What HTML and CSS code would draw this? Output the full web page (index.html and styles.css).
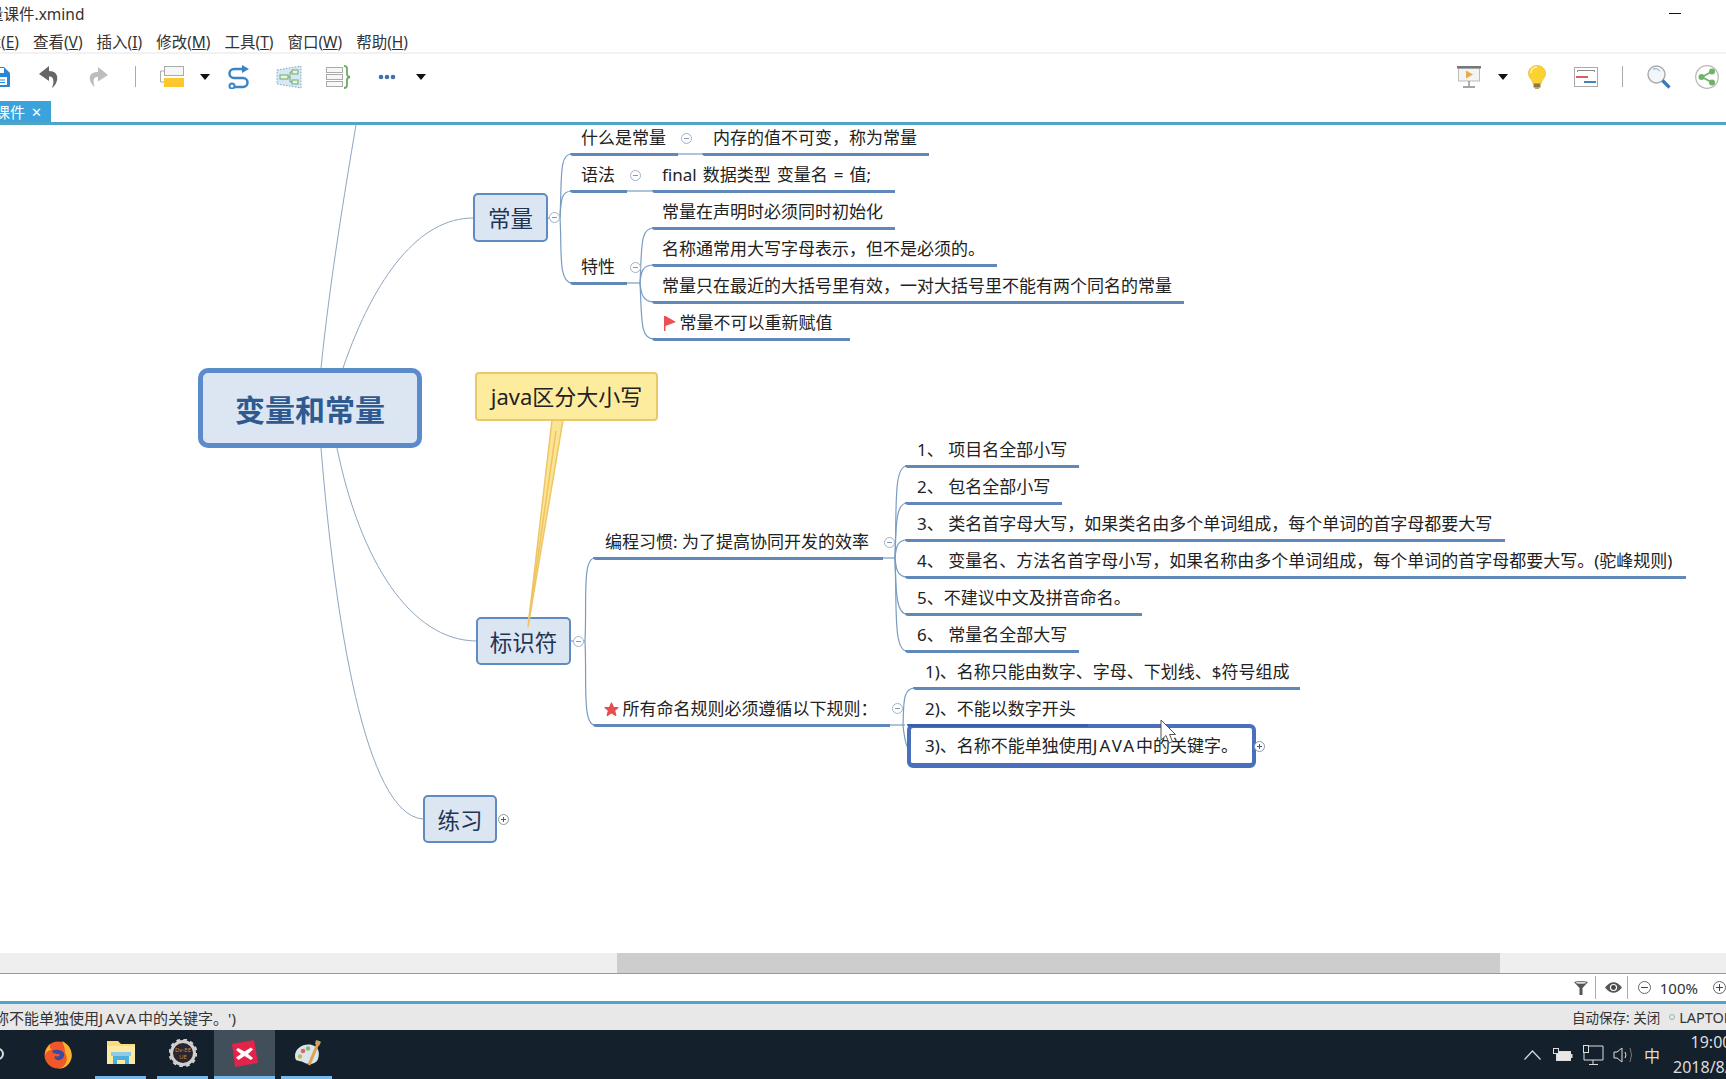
FILE: index.html
```html
<!DOCTYPE html>
<html lang="en">
<head>
  <meta charset="UTF-8">
  <meta name="viewport" content="width=device-width, initial-scale=1.0">
  <title>XMind</title>
  <link rel="stylesheet" href="styles.css">
</head>
<body>
  <div class="app">
    <!-- Window title -->
    <div class="titlebar">
      <span class="title-text">变量和常量课件.xmind</span>
      <span class="win-min"></span>
    </div>

    <!-- Menu -->
    <div class="menubar">
      <span>编辑(<u>E</u>)</span>
      <span>查看(<u>V</u>)</span>
      <span>插入(<u>I</u>)</span>
      <span>修改(<u>M</u>)</span>
      <span>工具(<u>T</u>)</span>
      <span>窗口(<u>W</u>)</span>
      <span>帮助(<u>H</u>)</span>
    </div>

    <!-- Toolbar -->
    <div class="toolbar">
      <svg class="tb-save" width="20" height="20" viewBox="0 0 20 20"><path d="M1 0H14L20 6V19Q20 20 19 20H1Q0 20 0 19V1Q0 0 1 0Z" fill="#2a86d6"/><rect x="4" y="1" width="10" height="5" fill="#fff"/><rect x="4" y="10" width="13" height="8" fill="#fff"/><path d="M6 13H15M6 15.500H15" stroke="#2a86d6"/></svg>
      <svg class="tb-undo" width="20" height="22" viewBox="0 0 20 22"><path d="M10 0L0 8L10 15V10.500C14 10 16 14 13 22C19 18 22 5 10 5Z" fill="#666"/></svg>
      <svg class="tb-redo" width="20" height="22" viewBox="0 0 20 22"><path d="M10 1L20 9L10 15.500V11C6 10.500 4 14 7 21C1 17 -2 6 10 6Z" fill="#bdbdbd"/></svg>
      <span class="tb-sep tb-sep-1"></span>
      <svg class="tb-topic" width="24" height="21" viewBox="0 0 24 21"><rect x="4.500" y=".5" width="19" height="9" fill="#f6f6f8" stroke="#aaa"/><path d="M4 5H.5V16H4" fill="none" stroke="#aaa"/><rect x="4" y="12" width="20" height="9" fill="#fcc82d"/></svg>
      <span class="caret tb-caret-1"></span>
      <svg class="tb-rel" width="23" height="24" viewBox="0 0 23 24"><path d="M18 4H7a4.500 4.500 0 0 0 0 9H16a4.500 4.500 0 0 1 0 9H8" fill="none" stroke="#3a85c6" stroke-width="2.500"/><path d="M15 0L22 4L15 8Z" fill="#3a85c6"/><circle cx="5" cy="21" r="2.500" fill="#fff" stroke="#3a85c6" stroke-width="2"/></svg>
      <svg class="tb-bound" width="26" height="24" viewBox="0 0 26 24"><path d="M1 5L25 1V23L1 19Z" fill="#d5e8f3" stroke="#7fa6c4" stroke-dasharray="1.500 1.500"/><g fill="#e8f5d8" stroke="#72a77b"><rect x="4" y="10" width="8" height="4"/><rect x="16" y="5" width="6" height="4"/><rect x="16" y="15" width="6" height="4"/></g><path d="M12 12H14M14 7V17M14 7H16M14 17H16" stroke="#72a77b" fill="none"/></svg>
      <svg class="tb-summary" width="25" height="24" viewBox="0 0 25 24"><g fill="#f7f7f7" stroke="#aaa"><rect x=".5" y="2.500" width="16" height="5"/><rect x=".5" y="9.500" width="16" height="5"/><rect x=".5" y="16.500" width="16" height="5"/></g><path d="M18 .9Q21 1 21 4V9Q21 11.500 24 12Q21 12.500 21 15V20Q21 23 18 23" fill="none" stroke="#6fa868" stroke-width="1.800"/></svg>
      <svg class="tb-dots" width="18" height="6" viewBox="0 0 18 6"><g fill="#3e72ab"><circle cx="3" cy="3" r="2.300"/><circle cx="9" cy="3" r="2.300"/><circle cx="15" cy="3" r="2.300"/></g></svg>
      <span class="caret tb-caret-2"></span>

      <svg class="tb-present" width="24" height="22" viewBox="0 0 24 22"><rect x="1.500" y="2" width="21" height="13" fill="#f4f4f4" stroke="#bbb"/><rect width="24" height="2.500" fill="#777"/><path d="M12 15V20M6 21H18" stroke="#888" stroke-width="1.300"/><path d="M9 4.500L16 8.500L9 12.500Z" fill="#eda84a"/></svg>
      <span class="caret tb-caret-3"></span>
      <svg class="tb-bulb" width="18" height="24" viewBox="0 0 18 24"><path d="M9 .5C4 .5 .5 4 .5 8.500C.5 13 4.500 14.500 5 18.500H13C13.500 14.500 17.500 13 17.500 8.500C17.500 4 14 .5 9 .5Z" fill="#fbd22f" stroke="#eac65a"/><path d="M9 2C6 2 3 4 3 8" stroke="#fdeb9a" stroke-width="2" fill="none"/><rect x="5.500" y="18.500" width="7" height="4" fill="#8d7a43"/><rect x="7" y="22" width="4" height="2" fill="#b9a56b"/></svg>
      <svg class="tb-gantt" width="24" height="20" viewBox="0 0 24 20"><rect x=".5" y=".5" width="23" height="19" fill="#fff" stroke="#aaa"/><path d="M3.500 5V3.500H20.500V5" fill="none" stroke="#888"/><rect x="2" y="9" width="12" height="2" fill="#e05a5f"/><rect x="10" y="14" width="12" height="2" fill="#3f86bd"/></svg>
      <span class="tb-sep tb-sep-2"></span>
      <svg class="tb-search" width="24" height="24" viewBox="0 0 24 24"><circle cx="9.500" cy="9.500" r="8.500" fill="#f2f6fa" stroke="#a9a9a9" stroke-width="1.400"/><path d="M6 4Q10 2.500 13 6" stroke="#7ea6cb" fill="none"/><path d="M15.500 15.500L22.500 22.500" stroke="#3a78b8" stroke-width="3.200"/></svg>
      <svg class="tb-share" width="24" height="24" viewBox="0 0 24 24"><circle cx="12" cy="12" r="11.300" fill="#fff" stroke="#b8b8b8" stroke-width="1.200"/><path d="M7 12L17 6.500M7 12L17 17.500" stroke="#6fb26a" stroke-width="1.800"/><g fill="#6fb26a"><circle cx="6.500" cy="12" r="3"/><circle cx="17" cy="6.500" r="3"/><circle cx="17" cy="17.500" r="3"/></g></svg>
    </div>

    <!-- Tabs -->
    <div class="tabbar">
      <div class="tab"><span>变量和常量课件</span><b>✕</b></div>
    </div>
    <div class="blue-rule"></div>

    <!-- Mind map canvas -->
    <div class="map">
      <svg class="links" width="1726" height="828" viewBox="0 125 1726 828">
        <g fill="none" stroke="#8fa6bf">
          <path d="M321 368C330 280 345 190 356 125"/>
          <path d="M343 368C375 275 420 218 473 218"/>
          <path d="M337 448C360 560 410 640 476 641"/>
          <path d="M321 448C335 620 365 815 423 819"/>
        </g>
        <g fill="none" stroke="#7a9cc2" stroke-width="1.200">
          <path d="M548 218H560"/>
          <path d="M560 218C562 175 559 154 572 154"/>
          <path d="M560 218C561 200 561 191 572 191"/>
          <path d="M560 218C562 250 558 283 572 283"/>
          <path d="M678 154H702"/>
          <path d="M627 191H652"/>
          <path d="M627 283H640"/>
          <path d="M640 283C642 245 640 228 654 228"/>
          <path d="M640 283C641 272 642 265 654 265"/>
          <path d="M640 283C641 292 642 302 654 302"/>
          <path d="M640 283C642 320 640 339 654 339"/>
          <path d="M571 641H585"/>
          <path d="M585 641C587 600 582 558 595 558"/>
          <path d="M585 641C587 680 582 725 595 725"/>
          <path d="M883 558H895"/>
          <path d="M895 558C897 510 893 466 907 466"/>
          <path d="M895 558C896 530 895 503 907 503"/>
          <path d="M895 558C896 550 896 540 907 540"/>
          <path d="M895 558C896 566 896 577 907 577"/>
          <path d="M895 558C896 585 895 614 907 614"/>
          <path d="M895 558C897 605 893 651 907 651"/>
          <path d="M890 725H905"/>
          <path d="M903 725C904 705 902 688 915 688"/>
          <path d="M903 725C904 735 905 745 909 750"/>
        </g>
      </svg>

      <div class="node root">变量和常量</div>
      <div class="node main-const">常量</div>
      <div class="node main-ident">标识符</div>
      <div class="node main-practice">练习</div>

      <div class="leaf l-what">什么是常量</div>
      <div class="leaf l-value">内存的值不可变，称为常量</div>
      <div class="leaf l-syntax">语法</div>
      <div class="leaf l-final">final 数据类型 变量名 = 值;</div>
      <div class="leaf l-feature">特性</div>
      <div class="leaf l-init">常量在声明时必须同时初始化</div>
      <div class="leaf l-name">名称通常用大写字母表示，但不是必须的。</div>
      <div class="leaf l-scope">常量只在最近的大括号里有效，一对大括号里不能有两个同名的常量</div>
      <div class="leaf l-flag">
        <svg width="12" height="15" viewBox="0 0 12 15"><path d="M0 0H1.500L12 6L1.500 10V15H0Z" fill="#ee4f4f"/></svg>
        常量不可以重新赋值
      </div>

      <div class="leaf l-habit">编程习惯: 为了提高协同开发的效率</div>
      <div class="leaf l-h1">1、 项目名全部小写</div>
      <div class="leaf l-h2">2、 包名全部小写</div>
      <div class="leaf l-h3">3、 类名首字母大写，如果类名由多个单词组成，每个单词的首字母都要大写</div>
      <div class="leaf l-h4">4、 变量名、方法名首字母小写，如果名称由多个单词组成，每个单词的首字母都要大写。(驼峰规则)</div>
      <div class="leaf l-h5">5、不建议中文及拼音命名。</div>
      <div class="leaf l-h6">6、 常量名全部大写</div>

      <div class="leaf l-rules">
        <svg width="15" height="15" viewBox="0 0 15 15"><path d="M7.500 1L9.500 5.500H14L10.500 8.500L11.800 13.500L7.500 10.800L3.200 13.500L4.500 8.500L1 5.500H5.500Z" fill="#e94c4c" stroke="#e94c4c" stroke-width="1.200" stroke-linejoin="round"/></svg>
        所有命名规则必须遵循以下规则：
      </div>
      <div class="leaf l-r1">1)、名称只能由数字、字母、下划线、$符号组成</div>
      <div class="selected">3)、名称不能单独使用<span class="wide">JAVA</span>中的关键字。</div>
      <div class="leaf l-r2">2)、不能以数字开头</div>

      <span class="fold f-what"></span>
      <span class="fold f-syntax"></span>
      <span class="fold f-const"></span>
      <span class="fold f-feature"></span>
      <span class="fold f-ident"></span>
      <span class="fold f-habit"></span>
      <span class="fold f-rules"></span>
      <span class="fold plus f-sel"></span>
      <span class="fold plus f-practice"></span>

      <svg class="callout-tail" width="40" height="210" viewBox="0 0 40 210"><path d="M26 1H37L2 208Z" fill="#fbe594" stroke="#eec567" stroke-width="1.500"/><path d="M30 12L3 200" stroke="#f0c35e" stroke-width="1.500"/></svg>
      <div class="callout">java区分大小写</div>

      <svg class="cursor" width="16" height="26" viewBox="0 0 16 26"><path d="M1 1V21L6 16.500L9 24L12.500 22.500L9.500 15.500H15.500Z" fill="#fff" stroke="#555"/></svg>
    </div>

    <!-- Horizontal scrollbar -->
    <div class="hscroll"><div class="thumb"></div></div>

    <!-- Filter / zoom row -->
    <div class="viewbar">
      <svg class="vb-filter" width="14" height="14" viewBox="0 0 14 14"><path d="M0 1Q7 -1 14 1L8.500 7V14H5.500V7Z" fill="#555"/><ellipse cx="7" cy="1.800" rx="5" ry="1" fill="#ddd"/></svg>
      <span class="vb-sep"></span>
      <svg class="vb-eye" width="17" height="11" viewBox="0 0 17 11"><path d="M0 5.500Q8.500 -5 17 5.500Q8.500 16 0 5.500Z" fill="#555"/><circle cx="8.500" cy="5.500" r="3.600" fill="#fff"/><circle cx="8.500" cy="5.500" r="2.400" fill="#444"/></svg>
      <span class="vb-sep"></span>
      <span class="zoom-btn vb-minus"></span>
      <span class="zoom-label">100%</span>
      <span class="zoom-btn plus vb-plus"></span>
    </div>
    <div class="blue-rule"></div>

    <!-- Status bar -->
    <div class="statusbar">
      <div class="status-msg"><span>名称不能单独使用<span class="wide">JAVA</span>中的关键字。')</span></div>
      <div class="status-right">自动保存: 关闭<i></i><span class="host">LAPTOP-8VQ</span></div>
    </div>

    <!-- Windows taskbar -->
    <div class="taskbar">
      <span class="cortana"></span>
      <div class="task t-firefox">
        <svg width="28" height="28" viewBox="0 0 28 28"><circle cx="14" cy="14" r="13.500" fill="#f0582a"/><path d="M18 0C27 4 30 14 26 21C23 26 18 28 14 28C22 26 25 18 21 12C21 8 20 4 18 0Z" fill="#fbb32d"/><path d="M6 3C3 6 1 10 1 14C3 10 5 9 8 9C5 7 6 5 6 3Z" fill="#fbb32d"/><path d="M8 10C11 8 17 8 20 12C21 16 18 20 13 19C11 18 10 17 11 15C14 16 17 15 15 13C12 13 9 13 8 10Z" fill="#3b4aa8"/></svg>
      </div>
      <div class="task running t-files">
        <svg width="28" height="26" viewBox="0 0 28 26"><path d="M0 1H11L14 4H28V24H0Z" fill="#fbdb7c"/><path d="M0 6H28V24H0Z" fill="#fce9a4"/><rect x="6" y="16" width="16" height="8" fill="#4cb0dc"/><rect x="10" y="20" width="8" height="4" fill="#fce9a4"/><path d="M4 12H24V16H4Z" fill="#8fcbe8"/></svg>
      </div>
      <div class="task running t-gear">
        <svg width="28" height="28" viewBox="0 0 28 28"><circle cx="14" cy="14" r="11.500" fill="#2b2530" stroke="#cfcfcf" stroke-width="3"/><circle cx="14" cy="14" r="13" fill="none" stroke="#cfcfcf" stroke-width="3" stroke-dasharray="3.500 3.300"/><text x="14" y="12.500" class="gear-text">Dv-EE</text><text x="14" y="19.500" class="gear-text">UE</text></svg>
      </div>
      <div class="task running active t-xmind">
        <svg width="27" height="27" viewBox="0 0 27 27"><path d="M1 4L23 0L27 23L4 27Z" fill="#e4234a"/><path d="M7 8L13.500 11.500L20 7.500L22 9.500L17 14L22 18L20 20L13.500 16L7.500 20L5 17.500L10 14L5 10Z" fill="#fff"/></svg>
      </div>
      <div class="task running t-paint">
        <svg width="30" height="29" viewBox="0 0 30 29"><path d="M3 17C3 9 12 4 20 6C27 8 28 14 26 20C24 26 15 26 11 23C8 21 3 24 3 17Z" fill="#d8e6ec"/><circle cx="11" cy="12" r="2.300" fill="#d9665f"/><circle cx="16" cy="9.500" r="2.200" fill="#7dbb6f"/><circle cx="8" cy="17.500" r="2.200" fill="#c9b35a"/><path d="M27 2L17 26" stroke="#dfa052" stroke-width="3"/><path d="M24 1L29 3L27 7L23 5Z" fill="#c9a05f"/></svg>
      </div>

      <div class="tray">
        <svg class="tr-up" width="17" height="10" viewBox="0 0 17 10"><path d="M.5 9.500L8.500 1L16.500 9.500" fill="none" stroke="#ddd" stroke-width="1.200"/></svg>
        <svg class="tr-batt" width="20" height="14" viewBox="0 0 20 14"><rect x="3.500" y="3.500" width="14" height="9" fill="#e8e8e8" stroke="#ddd"/><rect x="18" y="6" width="1.500" height="4" fill="#ddd"/><rect x=".5" y=".5" width="5" height="5" fill="#14202b" stroke="#ddd"/></svg>
        <svg class="tr-net" width="21" height="20" viewBox="0 0 21 20"><path d="M1 1H20V15H1ZM10 15V19M6 19.500H15" fill="none" stroke="#ddd"/><rect x=".5" y=".5" width="5" height="7" fill="#14202b" stroke="#ddd"/></svg>
        <svg class="tr-vol" width="20" height="16" viewBox="0 0 20 16"><path d="M1 5H4L9 1V15L4 11H1Z" fill="none" stroke="#ddd"/><path d="M12 5Q14 8 12 11" fill="none" stroke="#ddd"/><path d="M17 1Q20 8 17 15" fill="none" stroke="#777"/></svg>
        <span class="tr-ime">中</span>
        <div class="clock"><span>19:00</span><span>2018/8/30</span></div>
      </div>
    </div>
  </div>
</body>
</html>
```

FILE: styles.css
```css
/* Reset and General Styling */
* {
  margin: 0;
  padding: 0;
  box-sizing: border-box;
}

html, body {
  width: 1726px;
  height: 1079px;
  overflow: hidden;
}

body {
  font-family: 'Noto Sans', 'Noto Sans CJK SC', sans-serif;
  background-color: #fff;
  color: #222;
}

.app {
  display: flex;
  flex-direction: column;
  width: 1726px;
  height: 1079px;
  overflow: hidden;
}

.wide {
  letter-spacing: 2px;
}

/* Title and menu */
.titlebar {
  height: 27px;
  display: flex;
  align-items: center;
  font-size: 15.5px;
  color: #333;
  flex-shrink: 0;
}

.title-text {
  margin-left: -74px;
  white-space: nowrap;
}

.win-min {
  width: 12px;
  height: 1px;
  background-color: #111;
  margin-left: auto;
  margin-right: 45px;
}

.menubar {
  height: 25px;
  display: flex;
  align-items: center;
  gap: 14px;
  margin-left: -30px;
  padding-top: 3px;
  font-size: 15.5px;
  color: #333;
  white-space: nowrap;
  flex-shrink: 0;
}

/* Toolbar */
.toolbar {
  height: 49px;
  display: flex;
  align-items: center;
  border-top: 2px solid #f2f2f2;
  padding-bottom: 2px;
  flex-shrink: 0;
}

.tb-save { margin-left: -10px; flex-shrink: 0; }
.tb-undo { margin-left: 29px; }
.tb-redo { margin-left: 29px; }
.tb-sep { width: 1px; height: 21px; background-color: #aaa; }
.tb-sep-1 { margin-left: 27px; }
.tb-topic { margin-left: 24px; }
.caret {
  width: 0;
  height: 0;
  border-left: 5px solid transparent;
  border-right: 5px solid transparent;
  border-top: 6px solid #111;
}
.tb-caret-1 { margin-left: 16px; }
.tb-rel { margin-left: 17px; }
.tb-bound { margin-left: 26px; }
.tb-summary { margin-left: 24px; }
.tb-dots { margin-left: 27px; }
.tb-caret-2 { margin-left: 20px; }
.tb-present { margin-left: auto; }
.tb-caret-3 { margin-left: 17px; }
.tb-bulb { margin-left: 20px; }
.tb-gantt { margin-left: 28px; }
.tb-sep-2 { margin-left: 24px; }
.tb-search { margin-left: 24px; }
.tb-share { margin-left: 24px; margin-right: 7px; }

/* Tabs */
.tabbar {
  height: 21px;
  flex-shrink: 0;
}

.tab {
  width: 51px;
  height: 21px;
  background-color: #3aa3dc;
  color: #fff;
  display: flex;
  justify-content: flex-end;
  align-items: center;
  gap: 6px;
  padding-right: 9px;
  font-size: 15px;
  white-space: nowrap;
  overflow: hidden;
}

.tab b {
  font-size: 13px;
  font-weight: normal;
}

.blue-rule {
  height: 3px;
  background-color: #4fa5c8;
  flex-shrink: 0;
}

/* Mind map */
.map {
  position: relative;
  height: 828px;
  flex-shrink: 0;
  overflow: hidden;
  background-color: #fff;
}

.links {
  position: absolute;
  left: 0;
  top: 0;
}

.node {
  position: absolute;
  display: flex;
  align-items: center;
  justify-content: center;
  background-color: #dce6f3;
  border: 2px solid #5f8bc0;
  border-radius: 5px;
  font-size: 22.5px;
  color: #1f3554;
}

.root {
  left: 198px;
  top: 243px;
  width: 224px;
  height: 80px;
  border-width: 5px;
  border-color: #5b8bcb;
  border-radius: 10px;
  font-size: 30px;
  font-weight: bold;
  color: #2f5a90;
}

.main-const { left: 473px; top: 68px; width: 75px; height: 49px; }
.main-ident { left: 476px; top: 492px; width: 95px; height: 48px; }
.main-practice { left: 423px; top: 670px; width: 74px; height: 48px; }

.leaf {
  position: absolute;
  height: 33px;
  line-height: 30px;
  font-size: 17px;
  color: #222;
  white-space: nowrap;
  border-bottom: 3px solid #6089ba;
  border-radius: 0 0 0 3px;
}

.leaf svg {
  vertical-align: -2px;
  margin-right: -1px;
}

/* top = underline y - 156 */
.l-what { left: 570px; top: -2px; width: 108px; padding-left: 11px; }
.l-value { left: 702px; top: -2px; width: 227px; padding-left: 11px; }
.l-syntax { left: 570px; top: 35px; width: 57px; padding-left: 11px; }
.l-final { left: 652px; top: 35px; width: 243px; padding-left: 10px; word-spacing: 1.6px; }
.l-feature { left: 570px; top: 127px; width: 57px; padding-left: 11px; }
.l-init { left: 652px; top: 72px; width: 243px; padding-left: 10px; }
.l-name { left: 652px; top: 109px; width: 345px; padding-left: 10px; }
.l-scope { left: 652px; top: 146px; width: 532px; padding-left: 10px; }
.l-flag { left: 652px; top: 183px; width: 198px; padding-left: 12px; }

.l-habit { left: 593px; top: 402px; width: 290px; padding-left: 12px; }
.l-h1 { left: 905px; top: 310px; width: 174px; padding-left: 12px; }
.l-h2 { left: 905px; top: 347px; width: 157px; padding-left: 12px; }
.l-h3 { left: 905px; top: 384px; width: 600px; padding-left: 12px; }
.l-h4 { left: 905px; top: 421px; width: 781px; padding-left: 12px; }
.l-h5 { left: 905px; top: 458px; width: 237px; padding-left: 12px; }
.l-h6 { left: 905px; top: 495px; width: 174px; padding-left: 12px; }

.l-rules { left: 593px; top: 569px; width: 297px; padding-left: 11px; }
.l-r1 { left: 913px; top: 532px; width: 387px; padding-left: 12px; }
.l-r2 { left: 907px; top: 569px; width: 181px; padding-left: 18px; border-bottom-color: #3a60ab; }

.selected {
  position: absolute;
  left: 907px;
  top: 599px;
  width: 349px;
  height: 44px;
  padding-left: 14px;
  line-height: 35px;
  font-size: 17px;
  background-color: #fff;
  border: 4px solid #4a70bb;
  border-bottom-width: 5px;
  border-radius: 6px;
  white-space: nowrap;
}

/* Collapse markers */
.fold {
  position: absolute;
  width: 11px;
  height: 11px;
  border: 1px solid #9fb3c8;
  border-radius: 50%;
  background-color: #fff;
}

.fold::after {
  content: "";
  position: absolute;
  left: 2px;
  top: 4px;
  width: 5px;
  height: 1px;
  background-color: #8299b3;
}

.fold.plus { border-color: #8a98a5; }
.fold.plus::after { background-color: #556; }
.fold.plus::before {
  content: "";
  position: absolute;
  left: 4px;
  top: 2px;
  width: 1px;
  height: 5px;
  background-color: #556;
}

.f-what { left: 681px; top: 8px; }
.f-syntax { left: 630px; top: 45px; }
.f-const { left: 549px; top: 87px; }
.f-feature { left: 630px; top: 137px; }
.f-ident { left: 573px; top: 511px; }
.f-habit { left: 884px; top: 412px; }
.f-rules { left: 892px; top: 578px; }
.f-sel { left: 1254px; top: 616px; }
.f-practice { left: 498px; top: 689px; }

/* Callout */
.callout {
  position: absolute;
  left: 475px;
  top: 247px;
  width: 183px;
  height: 49px;
  display: flex;
  align-items: center;
  justify-content: center;
  padding-bottom: 3px;
  background-color: #fdec9e;
  border: 2px solid #e9c86c;
  border-radius: 4px;
  font-size: 22px;
  color: #222;
  white-space: nowrap;
}

.callout-tail {
  position: absolute;
  left: 526px;
  top: 294px;
}

.cursor {
  position: absolute;
  left: 1160px;
  top: 594px;
}

/* Scrollbar */
.hscroll {
  height: 21px;
  background-color: #efefef;
  border-bottom: 1px solid #999;
  padding-left: 617px;
  flex-shrink: 0;
}

.thumb {
  width: 883px;
  height: 20px;
  background-color: #cdcdcd;
}

/* Zoom row */
.viewbar {
  height: 27px;
  display: flex;
  align-items: center;
  justify-content: flex-end;
  flex-shrink: 0;
}

.vb-sep {
  width: 1px;
  height: 23px;
  background-color: #aaa;
}

.vb-eye { margin: 0 5px 0 9px; }
.vb-filter { margin-right: 7px; }

.zoom-btn {
  position: relative;
  width: 13px;
  height: 13px;
  border: 1px solid #666;
  border-radius: 50%;
}

.zoom-btn::after {
  content: "";
  position: absolute;
  left: 2px;
  top: 5px;
  width: 7px;
  height: 1px;
  background-color: #444;
}

.zoom-btn.plus::before {
  content: "";
  position: absolute;
  left: 5px;
  top: 2px;
  width: 1px;
  height: 7px;
  background-color: #444;
}

.vb-minus { margin-left: 10px; }
.zoom-label {
  margin: 0 15px 0 9px;
  font-size: 15px;
  color: #333;
}

/* Status bar */
.statusbar {
  height: 26px;
  display: flex;
  align-items: center;
  background-color: #e8e8e8;
  font-size: 15px;
  color: #333;
  white-space: nowrap;
  flex-shrink: 0;
}

.status-msg {
  width: 236px;
  display: flex;
  justify-content: flex-end;
  overflow: hidden;
}

.status-right {
  margin-left: auto;
  width: 154px;
  display: flex;
  align-items: center;
  font-size: 13.5px;
  overflow: hidden;
}

.status-right i {
  width: 6px;
  height: 6px;
  flex-shrink: 0;
  border: 1px solid #8ba;
  border-radius: 50%;
  margin: 0 4px 0 9px;
}

.host {
  font-size: 14.5px;
}

/* Taskbar */
.taskbar {
  position: relative;
  flex: 1;
  display: flex;
  background-color: #14202b;
}

.cortana {
  position: absolute;
  left: -8px;
  top: 18px;
  width: 12px;
  height: 12px;
  border: 2px solid #ddd;
  border-radius: 50%;
}

.task {
  height: 49px;
  display: flex;
  align-items: center;
  justify-content: center;
  width: 51px;
}

.task.running {
  border-bottom: 3px solid #76b9ed;
}

.task.active {
  width: 61px;
  background-color: #414f5a;
}

.t-firefox { margin-left: 32px; }
.t-files { margin-left: 12px; }
.t-gear { margin-left: 11px; }
.t-xmind { margin-left: 6px; }
.t-paint { margin-left: 6px; }

.gear-text {
  font-size: 6px;
  fill: #c9893a;
  text-anchor: middle;
}

.tray {
  margin-left: auto;
  display: flex;
  align-items: center;
  height: 49px;
  color: #ddd;
  width: 202px;
  overflow: hidden;
  flex-shrink: 0;
}

.tray > * {
  flex-shrink: 0;
}

.tr-batt { margin-left: 12px; }
.tr-net { margin-left: 10px; }
.tr-vol { margin-left: 9px; }

.tr-ime {
  margin-left: 11px;
  font-size: 16px;
}

.clock {
  display: flex;
  flex-direction: column;
  align-items: center;
  margin-left: 13px;
  width: 76px;
  line-height: 25px;
  font-size: 16px;
  white-space: nowrap;
}
```
